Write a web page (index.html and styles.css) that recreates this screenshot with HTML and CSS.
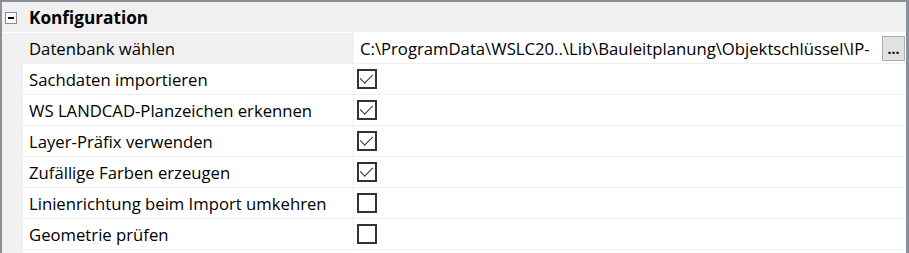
FILE: index.html
```html
<!DOCTYPE html>
<html lang="de">
<head>
  <meta charset="UTF-8">
  <title>Konfiguration</title>
  <link rel="stylesheet" href="styles.css">
</head>
<body>

<div id="property-grid">
  <div class="category">
    <div class="toggle"><span class="minus"></span></div>
    <div class="category-text">Konfiguration</div>
  </div>

  <div class="row selected">
    <div class="gutter"></div>
    <div class="name">Datenbank wählen</div>
    <div class="value">
      <span class="path">C:\ProgramData\WSLC20..\Lib\Bauleitplanung\Objektschlüssel\IP-</span>
      <button class="browse">...</button>
    </div>
  </div>
  <div class="row">
    <div class="gutter"></div>
    <div class="name">Sachdaten importieren</div>
    <div class="value"><span class="check checked"></span></div>
  </div>
  <div class="row">
    <div class="gutter"></div>
    <div class="name">WS LANDCAD-Planzeichen erkennen</div>
    <div class="value"><span class="check checked"></span></div>
  </div>
  <div class="row">
    <div class="gutter"></div>
    <div class="name">Layer-Präfix verwenden</div>
    <div class="value"><span class="check checked"></span></div>
  </div>
  <div class="row">
    <div class="gutter"></div>
    <div class="name">Zufällige Farben erzeugen</div>
    <div class="value"><span class="check checked"></span></div>
  </div>
  <div class="row">
    <div class="gutter"></div>
    <div class="name">Linienrichtung beim Import umkehren</div>
    <div class="value"><span class="check"></span></div>
  </div>
  <div class="row">
    <div class="gutter"></div>
    <div class="name">Geometrie prüfen</div>
    <div class="value"><span class="check"></span></div>
  </div>
  <div class="filler">
    <div class="gutter"></div>
  </div>
</div>

</body>
</html>
```

FILE: styles.css
```css
body {
  margin: 0;
  padding: 0;
  font-family: "Open Sans", "Noto Sans", Arial, sans-serif;
  font-size: 16.7px;
  color: #000;
  background-color: #fff;
}

#property-grid {
  width: 904px;
  height: 251px;
  border-top: 2px solid #8b8f99;
  border-left: 2px solid #8b8f99;
  border-right: 3px solid #8b8f99;
  display: flex;
  flex-direction: column;
  overflow: hidden;
}

.category {
  height: 30px;
  display: flex;
  align-items: center;
  background-color: #f0f0f0;
}

.toggle {
  width: 27px;
  display: flex;
  align-items: center;
  padding-left: 3px;
  box-sizing: border-box;
}

.minus {
  width: 10px;
  height: 10px;
  border: 1px solid #8c8c8c;
  background-color: #fafafa;
  position: relative;
  top: 1px;
}

.minus::after {
  content: "";
  position: absolute;
  left: 2px;
  top: 4px;
  width: 6px;
  height: 2px;
  background-color: #000;
}

.category-text {
  font-weight: bold;
  font-size: 17.2px;
}

.row {
  height: 30px;
  display: flex;
  border-bottom: 1px solid #f0f0f0;
}

.gutter {
  width: 21px;
  flex-shrink: 0;
  background-color: #f0f0f0;
}

.name {
  width: 331px;
  flex-shrink: 0;
  padding-left: 6px;
  box-sizing: border-box;
  display: flex;
  align-items: center;
  border-right: 1px solid #f0f0f0;
  white-space: nowrap;
}

.selected .name {
  background-color: #f0f0f0;
}

.selected {
  margin-top: 1px;
}

.value {
  flex: 1;
  display: flex;
  align-items: center;
  padding-left: 3px;
  white-space: nowrap;
  overflow: hidden;
}

.path {
  flex: 1;
  overflow: hidden;
  padding-left: 3px;
}

.browse {
  width: 23px;
  height: 25px;
  margin-right: 1px;
  padding: 0 0 4px 0;
  border: 1px solid #adadad;
  background-color: #e1e1e1;
  font-family: "Open Sans", Arial, sans-serif;
  font-size: 14px;
  font-weight: bold;
  line-height: 1;
  display: flex;
  align-items: flex-end;
  justify-content: center;
}

.check {
  width: 16px;
  height: 16px;
  border: 2px solid #333;
  position: relative;
}

.check.checked::after {
  content: "";
  position: absolute;
  left: 4px;
  top: 0;
  width: 6px;
  height: 11px;
  border-right: 1.6px solid #333;
  border-bottom: 1.6px solid #333;
  transform: rotate(45deg);
}

.filler {
  flex: 1;
  display: flex;
}
```
